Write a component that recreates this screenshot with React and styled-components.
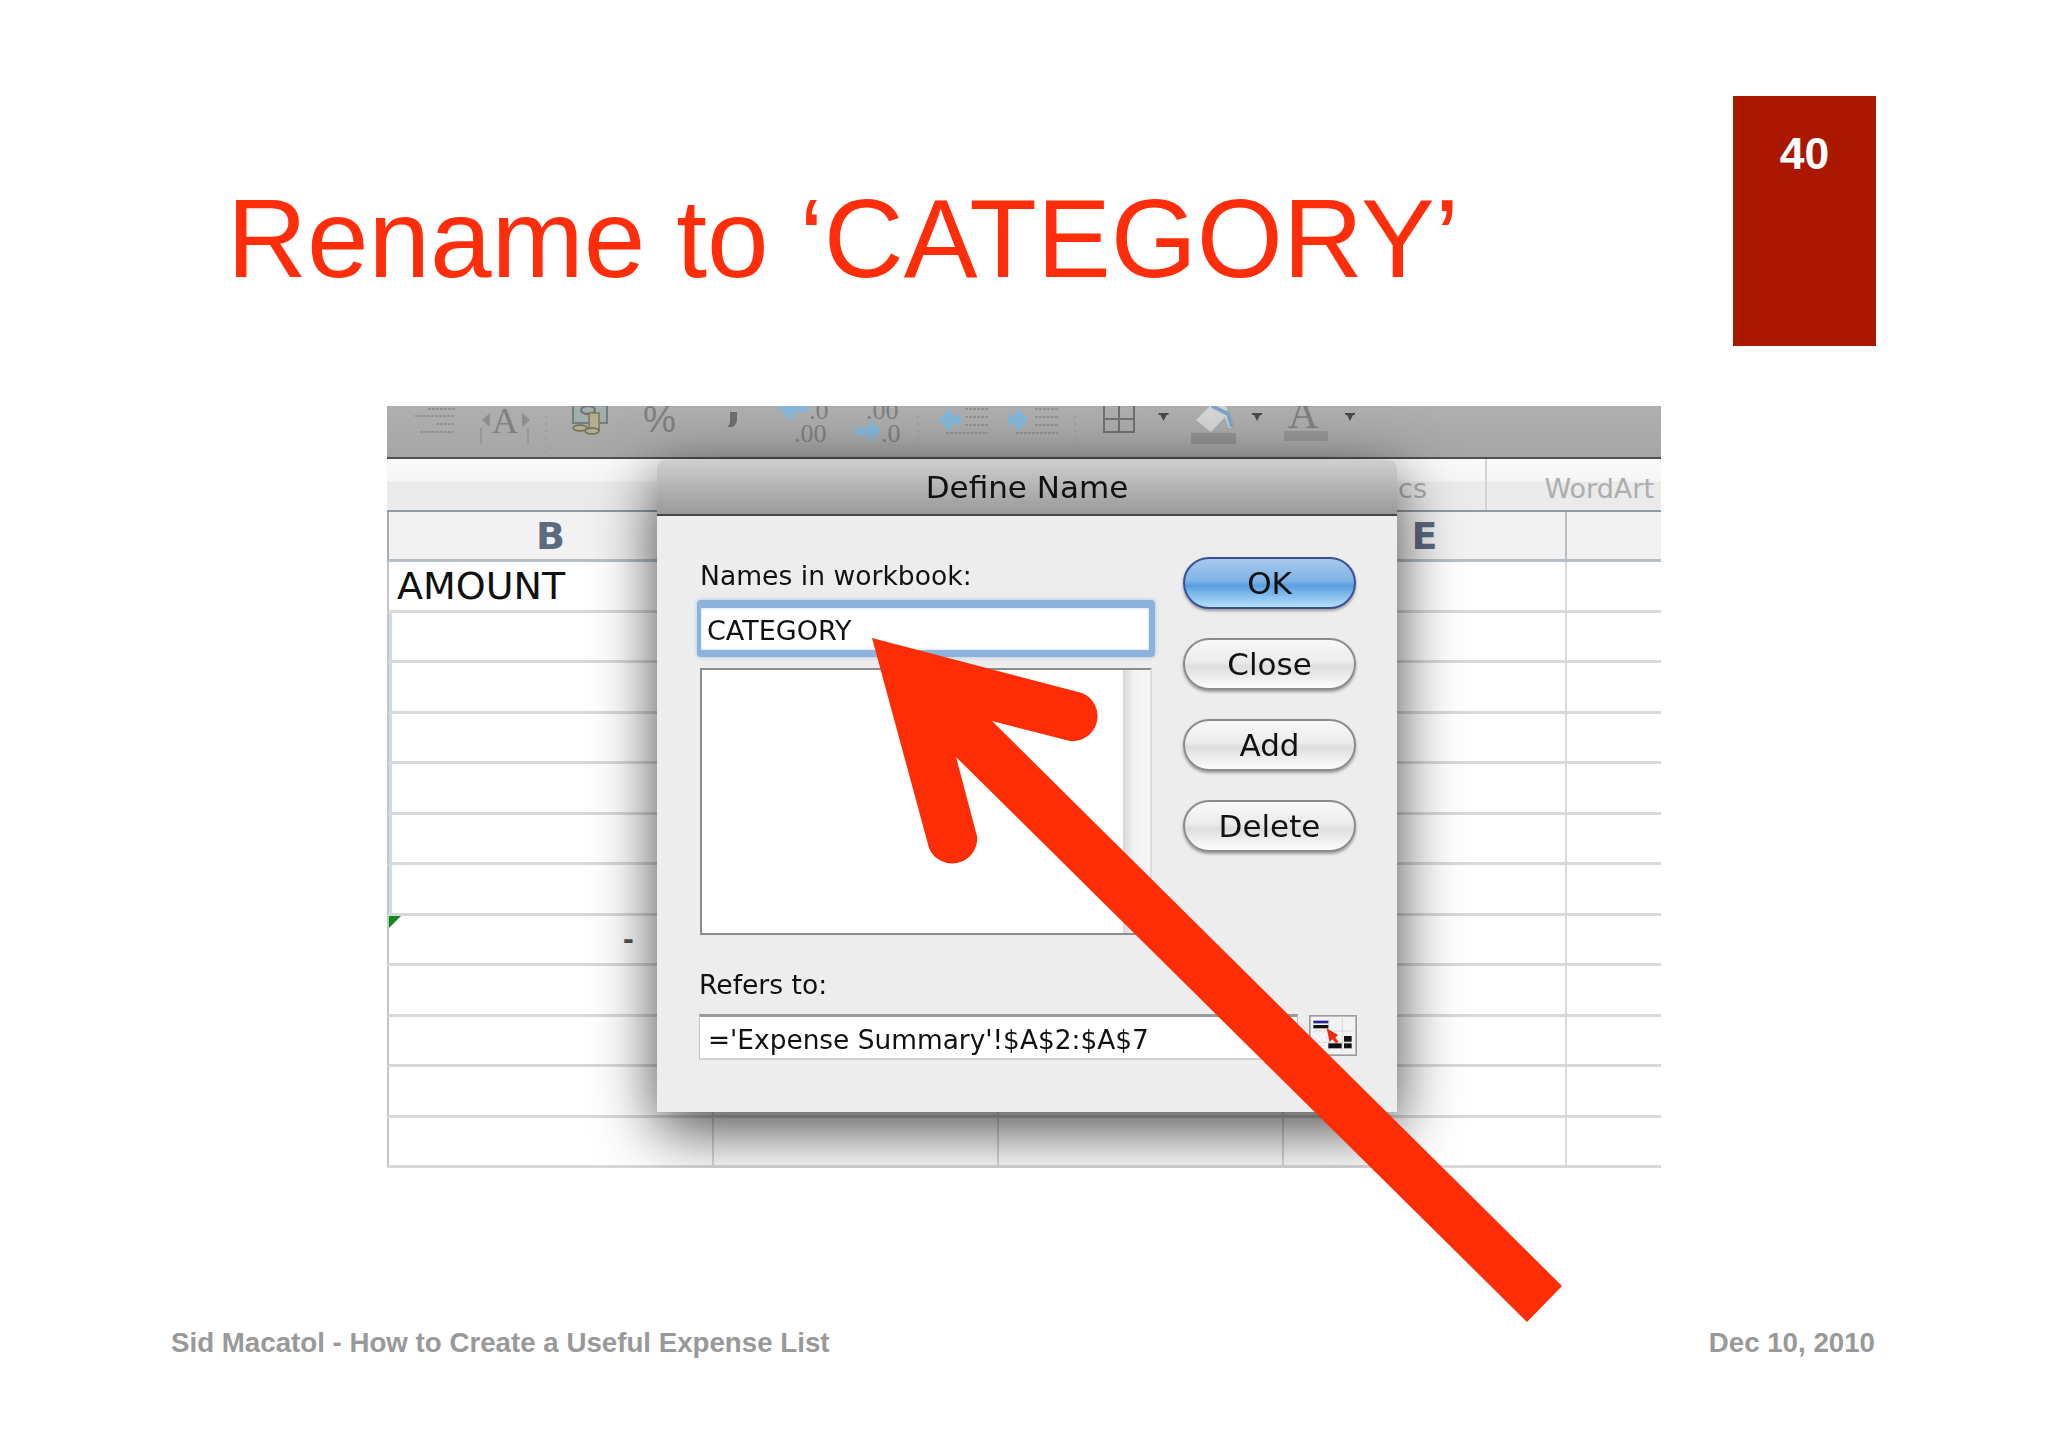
import React from 'react';
import styled, { createGlobalStyle } from 'styled-components';

const GlobalStyle = createGlobalStyle`
    html, body {
        margin: 0;
        padding: 0;
        background: #fff;
    }
`

const Slide = styled.div`
    position: relative;
    width: 2048px;
    height: 1447px;
    background: #fff;
    font-family: "Liberation Sans", Arial, sans-serif;
    overflow: hidden;
`
const Header = styled.header`
    display: flex;
    justify-content: space-between;
    align-items: flex-start;
    padding: 96px 172px 0 227px;
`
const Title = styled.h1`
    margin: 76px 0 0;
    font-size: 110.7px;
    line-height: 134px;
    font-weight: 400;
    color: #ff2d0a;
    white-space: nowrap;
`
const PageBadge = styled.div`
    width: 143px;
    height: 250px;
    box-sizing: border-box;
    padding-top: 33px;
    background: #aa1800;
    color: #fff;
    font-size: 44.5px;
    line-height: 50px;
    font-weight: 700;
    text-align: center;
`
const Capture = styled.section`
    position: relative;
    width: 1274px;
    height: 762px;
    margin: 60px 0 0 387px;
    overflow: hidden;
    font-family: "DejaVu Sans", sans-serif;
    filter: blur(0.6px);
`
const Toolbar = styled.div`
    display: flex;
    align-items: flex-start;
    height: 51px;
    padding-left: 28px;
    background: linear-gradient(#afafaf, #a6a6a6);
    border-bottom: 2px solid #4f4f4f;
`
const ToolSvg = styled.svg`
    flex-shrink: 0;
    margin-left: ${props => props.$gap || 0}px;
`
const TabRow = styled.div`
    display: flex;
    justify-content: flex-end;
    height: 51px;
    background: linear-gradient(#fafafa 0, #f6f6f6 42%, #ebebeb 46%, #ebebeb 100%);
`
const TabCell = styled.div`
    width: ${props => props.$width}px;
    box-sizing: border-box;
    padding-right: ${props => props.$pad}px;
    border-right: ${props => props.$line ? '2px solid #d4d4d4' : 'none'};
    color: #adadad;
    font-size: 27px;
    line-height: 60px;
    text-align: right;
`
const Grid = styled.div`
    display: grid;
    grid-template-columns: 327px 285px 285px 283px 94px;
    grid-template-rows: 50px repeat(12, 50.5px);
    border-top: 2px solid #8f9aa3;
`
const HeadCell = styled.div`
    display: flex;
    align-items: center;
    justify-content: center;
    box-sizing: border-box;
    background: #f2f2f2;
    border-bottom: 3px solid #b6c0c8;
    border-right: ${props => props.$last ? 'none' : '2px solid #b6c0c8'};
    border-left: ${props => props.$first ? '2px solid #a5adb5' : 'none'};
    color: #5d6b80;
    font-size: 38px;
    font-weight: 700;
`
const Cell = styled.div`
    position: relative;
    display: flex;
    align-items: center;
    justify-content: ${props => props.$end ? 'flex-end' : 'flex-start'};
    box-sizing: border-box;
    padding: ${props => props.$end ? '0 78px 0 0' : '0 0 0 8px'};
    background: #fff;
    border-bottom: 3px solid #d9d9d9;
    border-right: ${props => props.$last ? 'none' : '2px solid #d9d9d9'};
    border-left: ${props => props.$first ? '2px solid #c4c4c4' : 'none'};
    box-shadow: ${props => props.$selected ? 'inset 3px 0 0 #c9dcf1' : 'none'};
    color: #111;
    font-size: 38px;
`
const Dash = styled.span`
    font-size: 27px;
    font-weight: 700;
    color: #555;
`
const CornerMark = styled.span`
    position: absolute;
    left: 0;
    top: 0;
    width: 0;
    height: 0;
    border-top: 12px solid #12891c;
    border-right: 12px solid transparent;
`
const Dialog = styled.div`
    position: absolute;
    left: 270px;
    top: 54px;
    width: 740px;
    height: 652px;
    background: #ededee;
    border-radius: 8px 8px 0 0;
    box-shadow: 0 18px 62px rgba(0, 0, 0, 0.72);
`
const DialogTitle = styled.div`
    height: 54px;
    background: linear-gradient(#cfcfcf, #999);
    border-bottom: 2px solid #454545;
    border-radius: 8px 8px 0 0;
    color: #111;
    font-size: 31px;
    line-height: 54px;
    text-align: center;
`
const DialogBody = styled.div`
    display: flex;
    flex-direction: column;
    padding: 41px 0 0 40px;
`
const TopRow = styled.div`
    display: flex;
    align-items: flex-start;
`
const NamesColumn = styled.div`
    display: flex;
    flex-direction: column;
    width: 458px;
`
const FieldLabel = styled.label`
    margin: ${props => props.$margin};
    color: #111;
    font-size: 26.6px;
    line-height: 32px;
`
const NameInput = styled.div`
    height: 57px;
    box-sizing: border-box;
    background: #fff;
    border-style: solid;
    border-color: #8db3dc;
    border-width: 8px 6px 7px 4px;
    border-radius: 4px;
    padding-left: 6px;
    box-shadow: 0 0 4px #a8c4e4, inset 0 0 3px #b7cfe8;
    color: #111;
    font-size: 27px;
    line-height: 46px;
`
const NameList = styled.div`
    display: flex;
    justify-content: flex-end;
    width: 452px;
    height: 267px;
    box-sizing: border-box;
    margin: 11px 0 0 3px;
    background: #fff;
    border: 2px solid #8c8c8c;
    border-right: 2px solid #dcdcdc;
`
const ScrollTrack = styled.div`
    width: 27px;
    background: linear-gradient(90deg, #d6d6d6, #f2f2f2 40%, #f7f7f7);
`
const ButtonColumn = styled.div`
    display: flex;
    flex-direction: column;
    gap: 29px;
    margin-left: 28px;
`
const PillButton = styled.button`
    width: 173px;
    height: 52px;
    padding: 0;
    border-radius: 26px;
    border: 2px solid ${props => props.$primary ? '#3a4f92' : '#8b8b8b'};
    background: ${props => props.$primary
        ? 'linear-gradient(#a7c9ec 0, #7fb3e6 45%, #5a9ee0 55%, #b4e0fa 100%)'
        : 'linear-gradient(#f8f8f8 0, #ececec 45%, #dedede 55%, #fdfdfd 100%)'};
    box-shadow: 0 2px 3px rgba(0, 0, 0, 0.35);
    color: #111;
    font-family: "DejaVu Sans", sans-serif;
    font-size: 31px;
    line-height: 46px;
`
const RefersRow = styled.div`
    display: flex;
    align-items: flex-start;
    gap: 11px;
    margin-left: 2px;
`
const RefersInput = styled.div`
    width: 599px;
    height: 46px;
    box-sizing: border-box;
    padding-left: 8px;
    background: #fff;
    border-top: 3px solid #9a9a9a;
    border-left: 1px solid #c4c4c4;
    border-right: 1px solid #c4c4c4;
    border-bottom: 2px solid #d0d0d0;
    color: #111;
    font-size: 26.4px;
    line-height: 46px;
    white-space: nowrap;
`
const RangeButton = styled.div`
    display: flex;
    margin-top: 1px;
`
const Overlay = styled.svg`
    position: absolute;
    left: 0;
    top: 0;
    pointer-events: none;
`
const Footer = styled.footer`
    display: flex;
    justify-content: space-between;
    margin-top: 159px;
    padding: 0 173px 0 171px;
    color: #999;
    font-size: 27.7px;
    line-height: 32px;
    font-weight: 700;
`

const Tool = ({ x, w, gap, children }) => (
    <ToolSvg $gap={gap} width={w} height={51} viewBox={`${x} 406 ${w} 51`}>
        {children}
    </ToolSvg>
);

const GREY = '#7f7f7f';
const BLUE = '#86b6d8';

const Lines = ({ x, w, ys }) => (
    <g stroke="#8b8b8b" strokeWidth="1.6" strokeDasharray="3 1">
        {ys.map(y => <line key={y} x1={x} x2={x + w} y1={y} y2={y} />)}
    </g>
);

const Drop = ({ x }) => (
    <path d={`M${x} 413h10v2h-2l-3 6l-3 -6h-2z`} fill="#4a4a4a" />
);

const Separator = ({ x, gap }) => (
    <Tool x={x} w={2} gap={gap}>
        <line x1={x + 1} x2={x + 1} y1="416" y2="455" stroke="#9a9a9a" strokeWidth="1.5" strokeDasharray="2 5" />
    </Tool>
);

const RangeIcon = () => (
    <svg width="48" height="41" viewBox="0 0 144 123">
        <rect x="2" y="2" width="140" height="119" fill="#f3f3f3" stroke="#9c9c9c" strokeWidth="6" />
        <path d="M12 48h120M12 82h120M60 10v100M100 10v100" stroke="#d9d9d9" strokeWidth="3" />
        <rect x="13" y="17" width="45" height="8" fill="#24248c" />
        <rect x="13" y="30" width="45" height="10" fill="#111" />
        <path d="M53 40l34 20l-8 8l10 12l-8 5l-11-12l-8 8z" fill="#ef2a12" />
        <rect x="105" y="63" width="23" height="17" fill="#111" />
        <rect x="58" y="85" width="40" height="15" fill="#111" />
        <rect x="105" y="85" width="23" height="15" fill="#111" />
    </svg>
);

const rows = Array.from({ length: 12 }, (_, i) => i);

const App = () => {
    return(
        <Slide>
            <GlobalStyle />
            <Header>
                <Title>Rename to ‘CATEGORY’</Title>
                <PageBadge>40</PageBadge>
            </Header>

            <Capture>
                <Toolbar>
                    <Tool x={415} w={40}>
                        <Lines x={428} w={27} ys={[409]} />
                        <Lines x={415} w={40} ys={[416]} />
                        <Lines x={436} w={18} ys={[424]} />
                        <Lines x={420} w={34} ys={[432]} />
                    </Tool>
                    <Tool x={480} w={50} gap={25}>
                        <path d="M482 420l8-7v14zM530 420l-8-7v14z" fill="#8e8e8e" />
                        <text x="492" y="433" fontFamily="Liberation Serif" fontSize="36" fill={GREY}>A</text>
                        <path d="M481 428v16M528 428v16" stroke="#929292" strokeWidth="1.5" />
                    </Tool>
                    <Separator x={545} gap={15} />
                    <Tool x={571} w={37} gap={24}>
                        <path d="M573 406v17h34v-17" fill="#a2aeac" stroke="#6f7f7c" strokeWidth="2" />
                        <ellipse cx="588" cy="410" rx="7" ry="4" fill="none" stroke="#6f6f6f" strokeWidth="2" />
                        <rect x="589" y="413" width="10" height="17" fill="#b4ae8c" stroke="#77765f" strokeWidth="1.5" />
                        <ellipse cx="580" cy="428" rx="7" ry="3" fill="#b4ae8c" stroke="#6b6b5a" strokeWidth="1.5" />
                        <ellipse cx="592" cy="431" rx="7" ry="3" fill="#b4ae8c" stroke="#6b6b5a" strokeWidth="1.5" />
                    </Tool>
                    <Tool x={644} w={33} gap={36}>
                        <text x="643" y="432" fontFamily="Liberation Sans" fontSize="37" fill={GREY}>%</text>
                    </Tool>
                    <Tool x={727} w={10} gap={50}>
                        <path d="M730 412h7v7q0 6-5 8h-5q3-2 3-6z" fill="#6d6d6d" />
                    </Tool>
                    <Tool x={777} w={52} gap={40}>
                        <path d="M777 406h31v6h-11l-2 2l-3 7l-10-9z" fill={BLUE} />
                        <text x="809" y="419" fontFamily="Liberation Serif" fontSize="26" fill={GREY}>.0</text>
                        <text x="794" y="442" fontFamily="Liberation Serif" fontSize="26" fill={GREY}>.00</text>
                    </Tool>
                    <Tool x={855} w={46} gap={26}>
                        <text x="866" y="419" fontFamily="Liberation Serif" fontSize="26" fill={GREY}>.00</text>
                        <path d="M855 427h14v-8l12 12l-12 12v-8h-14z" fill={BLUE} />
                        <text x="881" y="442" fontFamily="Liberation Serif" fontSize="26" fill={GREY}>.0</text>
                    </Tool>
                    <Separator x={917} gap={16} />
                    <Tool x={938} w={50} gap={19}>
                        <path d="M938 420l13-13v8h10v10h-10v8z" fill={BLUE} />
                        <Lines x={965} w={23} ys={[409, 417, 425]} />
                        <Lines x={946} w={42} ys={[433]} />
                    </Tool>
                    <Tool x={1008} w={50} gap={20}>
                        <path d="M1029 420l-13-13v8h-8v10h8v8z" fill={BLUE} />
                        <Lines x={1035} w={23} ys={[409, 417, 425]} />
                        <Lines x={1016} w={42} ys={[433]} />
                    </Tool>
                    <Separator x={1074} gap={16} />
                    <Tool x={1103} w={32} gap={27}>
                        <path d="M1104 406v26h30v-26M1119 406v26M1104 419h30" fill="none" stroke="#707070" strokeWidth="2" />
                    </Tool>
                    <Tool x={1158} w={11} gap={23}><Drop x={1158.5} /></Tool>
                    <Tool x={1191} w={45} gap={22}>
                        <path d="M1196 420l14-14h16l6 22h-3l-4-11l-14 15z" fill="#d4d4d4" />
                        <path d="M1212 406l16 8l4 13" fill="none" stroke="#7fa4c4" strokeWidth="4" />
                        <rect x="1191" y="433" width="45" height="11" fill="#929292" />
                    </Tool>
                    <Tool x={1252} w={10} gap={16}><Drop x={1252} /></Tool>
                    <Tool x={1284} w={44} gap={22}>
                        <text x="1288" y="428" fontFamily="Liberation Serif" fontSize="42" fill={GREY}>A</text>
                        <rect x="1284" y="431" width="44" height="10" fill="#969696" />
                    </Tool>
                    <Tool x={1345} w={10} gap={17}><Drop x={1345} /></Tool>
                </Toolbar>

                <TabRow>
                    <TabCell $width={100} $pad={58} $line>cs</TabCell>
                    <TabCell $width={174} $pad={7}>WordArt</TabCell>
                </TabRow>

                <Grid>
                    <HeadCell $first>B</HeadCell>
                    <HeadCell />
                    <HeadCell />
                    <HeadCell>E</HeadCell>
                    <HeadCell $last />
                    {rows.map(i => (
                        <React.Fragment key={i}>
                            <Cell $first $selected={i > 0 && i < 7} $end={i === 7}>
                                {i === 0 && 'AMOUNT'}
                                {i === 7 && <CornerMark />}
                                {i === 7 && <Dash>-</Dash>}
                            </Cell>
                            <Cell />
                            <Cell />
                            <Cell />
                            <Cell $last />
                        </React.Fragment>
                    ))}
                </Grid>

                <Dialog>
                    <DialogTitle>Define Name</DialogTitle>
                    <DialogBody>
                        <TopRow>
                            <NamesColumn>
                                <FieldLabel $margin="3px 0 8px 3px">Names in workbook:</FieldLabel>
                                <NameInput>CATEGORY</NameInput>
                                <NameList>
                                    <ScrollTrack />
                                </NameList>
                            </NamesColumn>
                            <ButtonColumn>
                                <PillButton $primary>OK</PillButton>
                                <PillButton>Close</PillButton>
                                <PillButton>Add</PillButton>
                                <PillButton>Delete</PillButton>
                            </ButtonColumn>
                        </TopRow>
                        <FieldLabel $margin="34px 0 13px 2px">Refers to:</FieldLabel>
                        <RefersRow>
                            <RefersInput>='Expense Summary'!$A$2:$A$7</RefersInput>
                            <RangeButton><RangeIcon /></RangeButton>
                        </RefersRow>
                    </DialogBody>
                </Dialog>
            </Capture>

            <Footer>
                <span>Sid Macatol - How to Create a Useful Expense List</span>
                <span>Dec 10, 2010</span>
            </Footer>

            <Overlay width="2048" height="1447" viewBox="0 0 2048 1447">
                <path
                    d="M872 638L1082 693A25 25 0 0 1 1070 741L992 721L1562 1286L1527 1322L956 757L977 836A25 25 0 0 1 929 848Z"
                    fill="#ff2d06"
                />
            </Overlay>
        </Slide>
    );
};

export default App
